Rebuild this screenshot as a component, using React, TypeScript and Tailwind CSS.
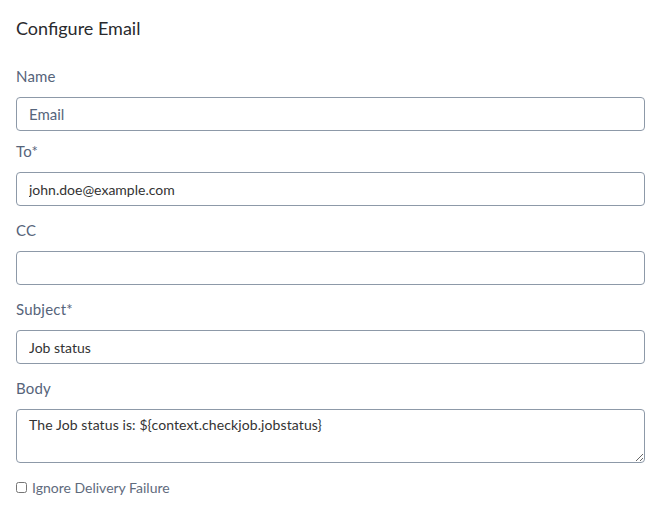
import { useState } from "react";

const labelCls = "block h-5 leading-5 text-[15px] tracking-[0.2px] text-[#56647a] mb-[11px]";
const inputCls =
  "block w-full h-[34px] px-3 border border-[#8d99a8] rounded-[4px] bg-white outline-none text-[#333]";

const App = () => {
  const [name, setName] = useState("Email");
  const [to, setTo] = useState("john.doe@example.com");
  const [cc, setCc] = useState("");
  const [subject, setSubject] = useState("Job status");
  const [body, setBody] = useState("The Job status is: ${context.checkjob.jobstatus}");
  const [ignore, setIgnore] = useState(false);

  return (
    <div className="min-h-screen bg-white px-4 pt-[16px] font-['Lato',sans-serif]">
      <h1 className="h-6 leading-6 text-[18px] text-[#2a2a2e]">Configure Email</h1>

      <div className="mt-[26px]">
        <label className={labelCls}>Name</label>
        <input
          className={`${inputCls} text-[15px] !text-[#56667c]`}
          value={name}
          onChange={(e) => setName(e.target.value)}
        />
      </div>

      <div className="mt-[10px]">
        <label className={labelCls}>To*</label>
        <input
          className={`${inputCls} text-[14px]`}
          value={to}
          onChange={(e) => setTo(e.target.value)}
        />
      </div>

      <div className="mt-[14px]">
        <label className={labelCls}>CC</label>
        <input
          className={`${inputCls} text-[14px]`}
          value={cc}
          onChange={(e) => setCc(e.target.value)}
        />
      </div>

      <div className="mt-[14px]">
        <label className={labelCls}>Subject*</label>
        <input
          className={`${inputCls} text-[14px]`}
          value={subject}
          onChange={(e) => setSubject(e.target.value)}
        />
      </div>

      <div className="mt-[14px]">
        <label className={labelCls}>Body</label>
        <textarea
          className="block w-full h-[54px] px-3 py-[5px] border border-[#8d99a8] rounded-[4px] bg-white outline-none text-[14px] tracking-[0.1px] leading-5 text-[#333]"
          value={body}
          onChange={(e) => setBody(e.target.value)}
        />
      </div>

      <label className="mt-[14px] flex items-center h-5 gap-[5px] text-[14px] text-[#5f6b7d]">
        <input
          type="checkbox"
          className="w-[11px] h-[11px] m-0"
          checked={ignore}
          onChange={(e) => setIgnore(e.target.checked)}
        />
        Ignore Delivery Failure
      </label>
    </div>
  );
};

export default App;
